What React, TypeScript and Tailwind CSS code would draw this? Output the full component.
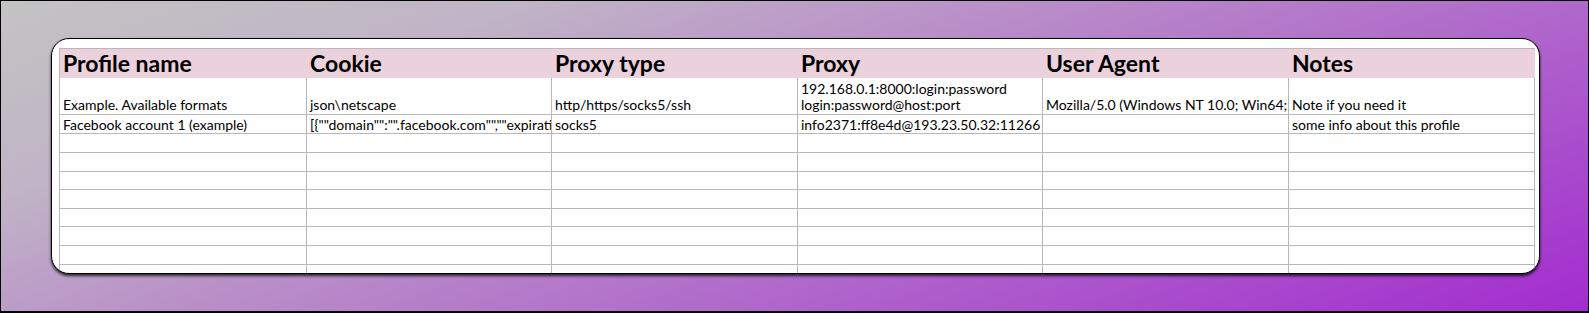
const columns = [
  { title: 'Profile name', width: 'w-[247px]' },
  { title: 'Cookie', width: 'w-[245px]' },
  { title: 'Proxy type', width: 'w-[246px]' },
  { title: 'Proxy', width: 'w-[245px]' },
  { title: 'User Agent', width: 'w-[246px]' },
  { title: 'Notes', width: 'w-[246px]' },
]

const exampleRow = [
  ['Example. Available formats'],
  ['json\\netscape'],
  ['http/https/socks5/ssh'],
  ['192.168.0.1:8000:login:password', 'login:password@host:port'],
  ['Mozilla/5.0 (Windows NT 10.0; Win64; x64) AppleWebKit/537.36 (KHTML, like Gecko)'],
  ['Note if you need it'],
]

const accountRow = [
  'Facebook account 1 (example)',
  '[{""domain"":"".facebook.com"",""expirationDate"":1735689600,""hostOnly"":false}]',
  'socks5',
  'info2371:ff8e4d@193.23.50.32:11266',
  '',
  'some info about this profile',
]

const emptyHeights = ['h-[19px]', 'h-[19px]', 'h-[18px]', 'h-[19px]', 'h-[18px]', 'h-[19px]', 'h-[19px]', 'h-[18px]']

export default function App() {
  return (
    <div className="w-[1589px] h-[313px] border border-b-2 border-black bg-[linear-gradient(160deg,#c3c3c3_0%,#c0b4c6_22%,#b98fc8_42%,#a22ccf_100%)] pl-[50px] pt-[37px] font-['Lato',sans-serif] text-black">
      <div className="w-[1489px] h-[236px] rounded-[18px] border border-black bg-white pl-[7px] pt-[9px] shadow-[0_2px_3px_rgba(0,0,0,0.75)] overflow-hidden">
        <div className="w-[1476px] border-l border-[#b8b8b8]">
          {/* header */}
          <div className="flex h-[30px] border-t border-[#b8b8b8] bg-[#ead1dc]">
            {columns.map((c) => (
              <div key={c.title} className={`${c.width} flex items-end pl-[3px] pb-[2px] text-[23px] leading-[26px] font-bold whitespace-nowrap`}>
                {c.title}
              </div>
            ))}
          </div>

          {/* example row */}
          <div className="flex h-[37px]">
            {exampleRow.map((lines, i) => (
              <div
                key={i}
                className={`${columns[i].width} flex flex-col justify-end border-r border-b border-[#b8b8b8] pl-[3px] pb-[1px] text-[14px] leading-[16px] overflow-hidden whitespace-nowrap`}
              >
                {lines.map((l) => (
                  <span key={l}>{l}</span>
                ))}
              </div>
            ))}
          </div>

          {/* account row */}
          <div className="flex h-[19px]">
            {accountRow.map((t, i) => (
              <div
                key={i}
                className={`${columns[i].width} flex items-end border-r border-b border-[#b8b8b8] pl-[3px] text-[14px] leading-[16px] overflow-hidden whitespace-nowrap`}
              >
                {t}
              </div>
            ))}
          </div>

          {emptyHeights.map((h, r) => (
            <div key={r} className={`flex ${h}`}>
              {columns.map((c) => (
                <div key={c.title} className={`${c.width} border-r border-b border-[#b8b8b8]`} />
              ))}
            </div>
          ))}
        </div>
      </div>
    </div>
  )
}
